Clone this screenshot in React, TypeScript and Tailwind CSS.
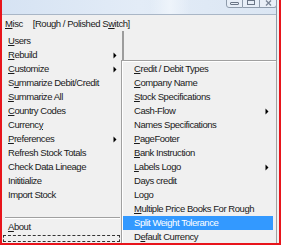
import React from "react";

const Arrow = () => (
  <svg width="4" height="7" viewBox="0 0 4 7" className="block">
    <path d="M0.5 0.5 L3.5 3.5 L0.5 6.5Z" fill="#000" />
  </svg>
);

function Label({ text, u }: { text: string; u: number }) {
  if (u < 0) return <span>{text}</span>;
  return (
    <span>
      {text.slice(0, u)}
      <span className="underline underline-offset-[1px]">{text[u]}</span>
      {text.slice(u + 1)}
    </span>
  );
}

type Item = { t: string; u: number; sub?: boolean };

const mainItems: Item[] = [
  { t: "Users", u: 0 },
  { t: "Rebuild", u: 0, sub: true },
  { t: "Customize", u: 0, sub: true },
  { t: "Summarize Debit/Credit", u: 1 },
  { t: "Summarize All", u: 0 },
  { t: "Country Codes", u: 0 },
  { t: "Currency", u: 7 },
  { t: "Preferences", u: 0, sub: true },
  { t: "Refresh Stock Totals", u: -1 },
  { t: "Check Data Lineage", u: -1 },
  { t: "Inititialize", u: -1 },
  { t: "Import Stock", u: -1 },
];

const subItems: Item[] = [
  { t: "Credit / Debit Types", u: 0 },
  { t: "Company Name", u: 0 },
  { t: "Stock Specifications", u: 0 },
  { t: "Cash-Flow", u: -1, sub: true },
  { t: "Names Specifications", u: -1 },
  { t: "PageFooter", u: 0 },
  { t: "Bank Instruction", u: 0 },
  { t: "Labels Logo", u: 0, sub: true },
  { t: "Days credit", u: -1 },
  { t: "Logo", u: -1 },
  { t: "Multiple Price Books For Rough", u: 0 },
  { t: "Split Weight Tolerance", u: -1 },
  { t: "Default Currency", u: 1 },
];

export default function App() {
  return (
    <div
      className="relative w-[281px] h-[245px] overflow-hidden border-l-2 border-r-2 border-b-2 border-[#e8141b] bg-[#f0f0f0] text-[9.5px] tracking-[-0.45px] text-[#1a1a1a]"
      style={{ fontFamily: '"Liberation Sans", Arial, sans-serif' }}
    >
      <div className="flex flex-col h-full w-[275px] border-r border-[#8c9aa6]">
        {/* title bar */}
        <div className="relative h-[15px] border-b border-[#a9b6c6] bg-gradient-to-r from-[#d6e3f3] via-[#e3ecf7] to-[#dbe6f3]">
          <div className="absolute top-0 left-[148px] w-[40px] h-full bg-gradient-to-r from-transparent via-[#eef4fb] to-transparent" />
          <div className="absolute top-[-3px] right-[-1px] flex h-[11px]">
            <div className="w-[17px] h-full border border-[#8e9bab] rounded-bl-[3px] bg-[#e7eef7] flex items-end justify-center pb-[2px]">
              <div className="w-[9px] h-[3px] border border-[#6b7686] rounded-[1px]" />
            </div>
            <div className="w-[17px] h-full border-y border-r border-[#8e9bab] bg-[#e7eef7] flex items-end justify-center pb-[2px]">
              <div className="w-[8px] h-[6px] border border-[#6b7686] border-t-2" />
            </div>
            <div className="w-[17px] h-full border-y border-r border-[#8e9bab] rounded-br-[3px] bg-[#e9eff7] flex items-end justify-center pb-[1px]">
              <svg width="7" height="6" viewBox="0 0 7 6" className="block">
                <path d="M1 0.5 L6 5.5 M6 0.5 L1 5.5" stroke="#7a8596" strokeWidth="1.3" />
              </svg>
            </div>
          </div>
        </div>
        {/* menu bar */}
        <div className="h-[15px] flex items-center gap-[10px] pl-[3px] pt-[4px]">
          <Label text="Misc" u={0} />
          <Label text="[Rough / Polished Switch]" u={19} />
        </div>
      </div>

      {/* main dropdown */}
      <div className="absolute left-0 top-[31px] w-[122px] h-[230px] border-r-2 border-[#9c9c9c] bg-[#f0f0f0] pt-[3px]">
        {mainItems.map((it) => (
          <div key={it.t} className="h-[14px] flex items-center pl-[6px] pr-[5px] justify-between">
            <Label text={it.t} u={it.u} />
            {it.sub && <Arrow />}
          </div>
        ))}
        <div className="h-[17px] flex items-end">
          <div className="w-[115px] ml-[3px] border-t border-[#a0a0a0] border-b border-b-white" />
        </div>
        <div className="h-[16px] flex items-center pl-[6px] pt-[1px]">
          <Label text="About" u={0} />
        </div>
        <div className="ml-[1px] w-[117px] h-[7px] border border-dashed border-[#333]" />
      </div>

      {/* submenu */}
      <div className="absolute left-[119px] top-[60px] w-[156px] h-[190px] border border-[#a0a0a0] shadow-[inset_1px_1px_0_#ffffff] bg-[#f0f0f0] pt-[1px] pl-[1px] pr-[3px]">
        {subItems.map((it) => {
          const hl = it.t === "Split Weight Tolerance";
          return (
            <div
              key={it.t}
              className={
                hl
                  ? "h-[14px] flex items-center justify-between pl-[11px] pr-[4px] pt-[1px] bg-[#3399ff] text-white"
                  : "h-[14px] flex items-center justify-between pl-[11px] pr-[4px] pt-[1px]"
              }
            >
              <Label text={it.t} u={it.u} />
              {it.sub && <Arrow />}
            </div>
          );
        })}
      </div>
    </div>
  );
}
